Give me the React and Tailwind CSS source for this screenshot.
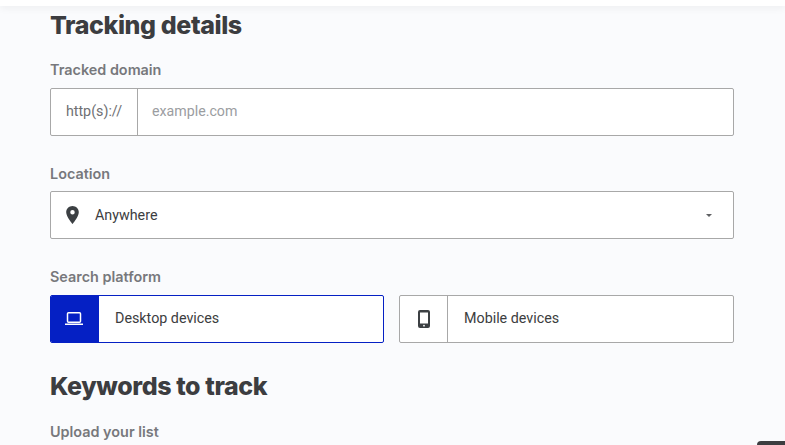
import React from "react";

const headingFont = "font-['Inter',sans-serif]";
const bodyFont = "font-['Roboto',sans-serif]";
const borderCol = "border-[#a8a8a8]";

const Label = ({ children }) => (
  <div className={`${headingFont} text-[14.4px] leading-[20px] font-semibold text-[#77787c]`}>{children}</div>
);

const PinIcon = () => (
  <svg width="13" height="18" viewBox="5 2 14 20" fill="#3c4043">
    <path d="M12 2C8.13 2 5 5.13 5 9c0 5.25 7 13 7 13s7-7.75 7-13c0-3.87-3.13-7-7-7zm0 9.5a2.5 2.5 0 1 1 0-5 2.5 2.5 0 0 1 0 5z" />
  </svg>
);

const LaptopIcon = () => (
  <svg width="18" height="14" viewBox="0 0 18 14" fill="none">
    <rect x="2.5" y="0.75" width="13" height="9.5" rx="1" stroke="#fff" strokeWidth="1.5" />
    <rect x="0" y="11.5" width="18" height="1.5" fill="#fff" />
  </svg>
);

const PhoneIcon = () => (
  <svg width="12" height="18" viewBox="0 0 12 18" fill="#3c4043">
    <path d="M2 0h8a2 2 0 0 1 2 2v14a2 2 0 0 1-2 2H2a2 2 0 0 1-2-2V2a2 2 0 0 1 2-2zm0 2.5V13.5h8V2.5H2z" fillRule="evenodd" />
    <circle cx="6" cy="15.7" r="0.9" fill="#fff" />
  </svg>
);

const App = () => {
  return (
    <div className="relative w-[785px] h-[445px] overflow-hidden bg-[#fafbfd]">
      <div className="h-[6px] bg-white shadow-[0_1px_8px_rgba(0,0,0,0.08)]" />
      <div className="px-[50px] w-[784px]">
        <h1 className={`${headingFont} mt-[4px] text-[25px] leading-[30px] font-extrabold text-[#3c3d40] tracking-[-0.4px]`}>
          Tracking details
        </h1>

        <div className="mt-[20px]">
          <Label>Tracked domain</Label>
        </div>
        <div className={`mt-[8px] flex h-[48px] bg-white border ${borderCol} rounded-[2px] ${bodyFont} text-[14.3px]`}>
          <div className={`w-[87px] flex items-center justify-center border-r ${borderCol} text-[#6f7073]`}>http(s)://</div>
          <input
            placeholder="example.com"
            className="flex-1 px-[14px] text-[14.2px] outline-none placeholder:text-[#9b9da1]"
          />
        </div>

        <div className="mt-[28px]">
          <Label>Location</Label>
        </div>
        <div className={`mt-[7px] flex items-center h-[48px] bg-white border ${borderCol} rounded-[2px] ${bodyFont} text-[14.3px] text-[#3c3d40]`}>
          <div className="w-[44px] pr-[2px] flex justify-center"><PinIcon /></div>
          <span className="pt-[1px]">Anywhere</span>
          <div className="ml-auto mr-[21px] w-0 h-0 border-x-[3.5px] border-x-transparent border-t-[3.5px] border-t-[#5f6063]" />
        </div>

        <div className="mt-[28px]">
          <Label>Search platform</Label>
        </div>
        <div className={`mt-[8px] flex gap-[15px] ${bodyFont} text-[14.3px] text-[#3c3d40]`}>
          <div className="w-[334px] flex h-[48px] bg-white border border-[#0520c4] rounded-[2px] overflow-hidden">
            <div className="w-[48px] pr-[2px] bg-[#0520c4] flex items-center justify-center"><LaptopIcon /></div>
            <div className="flex items-center pl-[16px]">Desktop devices</div>
          </div>
          <div className={`flex-1 flex h-[48px] bg-white border ${borderCol} rounded-[2px]`}>
            <div className={`w-[48px] border-r ${borderCol} flex items-center justify-center`}><PhoneIcon /></div>
            <div className="flex items-center pl-[16px]">Mobile devices</div>
          </div>
        </div>

        <h2 className={`${headingFont} mt-[28px] text-[25px] leading-[30px] font-extrabold text-[#3c3d40] tracking-[-0.4px]`}>
          Keywords to track
        </h2>
        <div className="mt-[21px]">
          <Label>Upload your list</Label>
        </div>
      </div>
      <div className="absolute right-0 bottom-0 w-[28px] h-[4px] bg-[#3c3d40] rounded-tl-[4px]" />
    </div>
  );
};

export default App;
